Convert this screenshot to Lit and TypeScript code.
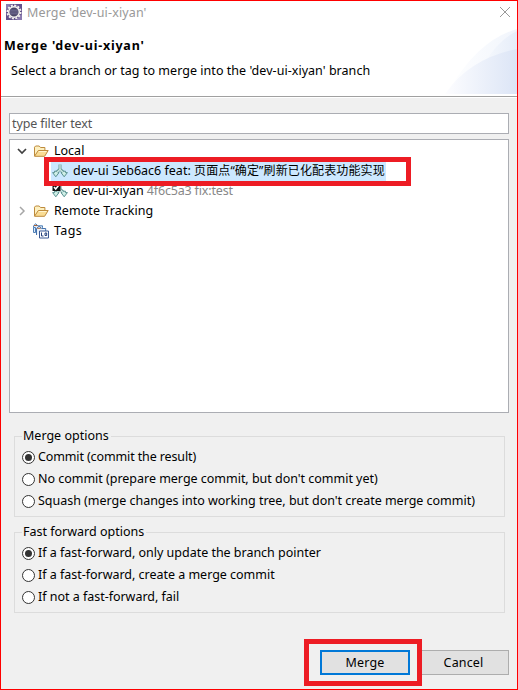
import { LitElement, html, css, svg, nothing } from "lit";
import { customElement, property, state } from "lit/decorators.js";
import { classMap } from "lit/directives/class-map.js";

const eclipseIcon = svg`<svg width="16" height="16" viewBox="0 0 16 16">
  <rect width="16" height="16" fill="#63528c"/>
  <path d="M0 0h5L0 6zM16 16h-6l6-6z" fill="#8a7bb0"/>
  <circle cx="8" cy="8" r="6.6" fill="none" stroke="#f3f1ee" stroke-width="1.8" stroke-dasharray="2.1 1.35"/>
  <circle cx="8" cy="8" r="5.3" fill="#4b4668" stroke="#f3f1ee" stroke-width="1.5"/>
  <path d="M4.2 6.2h7.6M3.8 8h8.4M4.2 9.8h7.6" stroke="#77739a" stroke-width=".9"/>
</svg>`;

const folderIcon = svg`<svg width="16" height="16" viewBox="0 0 16 16">
  <path d="M1.5 13V4.2L2.6 3h3.6l1.3 1.500h4.400v3" fill="#fdf0c0" stroke="#bd8a3c"/>
  <path d="M1.500 13.300L5.300 7.500h9.900l-3.600 5.800z" fill="#f9dc94" stroke="#bd8a3c" stroke-linejoin="round"/>
  <path d="M5.800 8.500h7.600" stroke="#fff4cf"/>
</svg>`;

const branchGlyph = svg`
  <path d="M8 1.500V6M8 6L3.700 10.300M8 6l4.300 4.300" fill="none" stroke="#6a9c9c" stroke-width="3"/>
  <path d="M.6 9.600h1.900V8.200h2.600v1.400h1.900L3.800 13.800zM9 9.600h1.900V8.200h2.600v1.400h1.900L12.200 13.800z" fill="#cdeee5" stroke="#5b9292"/>
  <path d="M8 1.500V6.300M8 6.300L3.800 10.600M8 6.300l4.200 4.300" fill="none" stroke="#d5f1ea" stroke-width="1.200"/>`;

const branchIcon = svg`<svg width="16" height="16" viewBox="0 0 16 16">${branchGlyph}</svg>`;

const checkedOutIcon = svg`<svg width="16" height="16" viewBox="0 0 16 16">${branchGlyph}
  <rect x=".500" y="0" width="8" height="8" fill="#111"/>
  <path d="M2 4l1.700 2L7.300 1.500" fill="none" stroke="#fff" stroke-width="1.500"/>
</svg>`;

const tagsIcon = svg`<svg width="16" height="16" viewBox="0 0 16 16">
  <path d="M.5 4.500V2.800L2.700.8l2.200 2h4.600v2M.5 4.500h2v5h-2z" fill="#dce9fa" stroke="#4f7fb5"/>
  <path d="M3.500 12V5.500l2.600-2.300 2.600 2.300h4V9" fill="#eaf2fc" stroke="#4573ad"/>
  <path d="M1 2.500h3.500M4.200 5.300h3.600" stroke="#a86438"/>
  <path d="M6.500 8h9v7h-9z" fill="#fff" stroke="#3c5a94"/>
  <path d="M8.500 9.500V13h2M12 10h1.700v2.500H12z" fill="none" stroke="#24407c"/>
</svg>`;

const icons = { folder: folderIcon, branch: branchIcon, head: checkedOutIcon, tags: tagsIcon };

interface TreeNode {
  depth: number;
  icon: keyof typeof icons;
  label: string;
  detail?: string;
  expanded?: boolean;
  selected?: boolean;
  spacing?: string;
}

const nodes: TreeNode[] = [
  { depth: 0, icon: "folder", label: "Local", expanded: true },
  { depth: 1, icon: "branch", label: "dev-ui 5eb6ac6 feat: ", detail: "页面点“确定”刷新已化配表功能实现", selected: true },
  { depth: 1, icon: "head", label: "dev-ui-xiyan", detail: "4f6c5a3 fix:test" },
  { depth: 0, icon: "folder", label: "Remote Tracking", expanded: false, spacing: "wide" },
  { depth: 0, icon: "tags", label: "Tags", spacing: "wider" },
];

@customElement("option-group")
class OptionGroup extends LitElement {
  @property() caption = "";
  @property({ type: Array }) options: string[] = [];
  @state() private chosen = 0;

  static styles = css`
    :host { display: block; }
    fieldset {
      box-sizing: border-box; height: 90px; margin: 0; padding: 0 0 0 7px;
      border: 1px solid #dcdcdc; min-width: 0;
    }
    legend { padding: 0 2px 0 1px; height: 18px; line-height: 18px; }
    .list { display: flex; flex-direction: column; gap: 4px; margin-top: 3px; }
    .row { display: flex; align-items: center; gap: 3px; height: 18px; white-space: nowrap; letter-spacing: -.02px; }
    .tight { letter-spacing: -.12px; }
    .dot {
      box-sizing: border-box; width: 13px; height: 13px; border: 1px solid #333;
      border-radius: 50%; background: #fff; display: grid; place-items: center;
    }
    .on::after { content: ""; width: 7px; height: 7px; border-radius: 50%; background: #333; }
  `;

  render() {
    return html`<fieldset>
      <legend>${this.caption}</legend>
      <div class="list">
        ${this.options.map((text, i) => html`
          <div class="row" @click=${() => (this.chosen = i)}>
            <span class=${classMap({ dot: true, on: i === this.chosen })}></span><span
              class=${classMap({ tight: text.startsWith("Commit") })}>${text}</span>
          </div>`)}
      </div>
    </fieldset>`;
  }
}

@customElement("app-root")
class AppRoot extends LitElement {
  static styles = css`
    :host {
      display: block; box-sizing: border-box; width: 518px; height: 690px;
      border: 1px solid #f00; background: #f0f0f0; color: #000; overflow: hidden;
      font: 12.5px/18px "Noto Sans", "Noto Sans CJK SC", sans-serif;
    }
    svg { display: block; flex: none; }
    header { position: relative; height: 95px; background: #fff; border-bottom: 1px solid #a0a0a0; box-shadow: 0 1px #fff; }
    .swoosh { position: absolute; right: 0; bottom: 2px; }
    .titlebar { display: flex; align-items: center; height: 22px; padding: 0 6px 0 5px; color: #999; }
    .titlebar .name { flex: 1; padding: 2px 0 0 5px; letter-spacing: .13px; }
    h1 { margin: 13px 0 0 3px; font-size: 12.5px; line-height: 20px; letter-spacing: .78px; }
    .hint { margin: 6px 0 0 10px; letter-spacing: .04px; }
    main { padding: 16px 8px 0; }
    .filter {
      box-sizing: border-box; height: 21px; padding: 0 2px; line-height: 19px; letter-spacing: -.12px;
      border: 1px solid #abadb3; background: #fff; color: #555;
    }
    .tree {
      box-sizing: border-box; position: relative; height: 274px; margin-top: 5px; padding-top: 1px;
      border: 1px solid #abadb3; background: #fff;
    }
    .node { display: flex; align-items: center; height: 20px; padding-left: 6px; white-space: pre; }
    .child { padding-left: 24px; }
    .twisty { width: 12px; height: 12px; margin-right: 5px; }
    .content { display: flex; align-items: center; gap: 5px; height: 20px; padding: 0 1px 0 0; }
    .child .content { padding-left: 1px; }
    .selected .content { background: #cce8ff; }
    .detail { color: #888; letter-spacing: -.17px; }
    .selected .detail { font-size: 12px; color: #000; letter-spacing: .13px; }
    .wide { letter-spacing: .06px; }
    .wider { letter-spacing: .4px; }
    .gap { margin-left: 3px; }
    .mark { position: absolute; box-sizing: border-box; border: 5px solid #ed1c24; }
    .mark.branch { left: 34px; top: 17px; width: 367px; height: 29px; }
    .groups { display: grid; gap: 6px; padding: 14px 4px 0 5px; }
    footer { display: flex; justify-content: flex-end; padding: 37px 8px 0 0; }
    .btn {
      box-sizing: border-box; position: relative; width: 91px; height: 25px; line-height: 23px;
      border: 1px solid #adadad; background: #e1e1e1; text-align: center; letter-spacing: .15px;
    }
    .primary { width: 90px; margin-right: 8px; border: 2px solid #0078d7; line-height: 21px; }
    .mark.button { left: -18px; top: -13px; width: 118px; height: 47px; z-index: 1; }
  `;

  private twisty(node: TreeNode) {
    if (node.expanded === undefined) return nothing;
    return node.expanded
      ? svg`<svg width="12" height="12" viewBox="0 0 12 12"><path d="M2 4l4 4 4-4" fill="none" stroke="#404040" stroke-width="1.700"/></svg>`
      : svg`<svg width="12" height="12" viewBox="0 0 12 12"><path d="M4 2l4 4-4 4" fill="none" stroke="#a6a6a6" stroke-width="1.500"/></svg>`;
  }

  private node(n: TreeNode) {
    return html`<div class=${classMap({ node: true, child: n.depth > 0, selected: !!n.selected })}>
      <span class="twisty">${this.twisty(n)}</span><div class="content">${icons[n.icon]}<div><span class=${n.spacing ?? ""}>${n.label}</span>${
        n.detail ? html`<span class=${classMap({ detail: true, gap: !n.selected })}>${n.detail}</span>` : nothing
      }</div></div></div>`;
  }

  render() {
    return html`
      <header>
        <svg class="swoosh" width="74" height="67" viewBox="0 0 74 67">
          <defs>
            <linearGradient id="a"><stop offset="0" stop-color="#fff"/><stop offset="1" stop-color="#f1f5fc"/></linearGradient>
            <linearGradient id="b"><stop offset="0" stop-color="#fdfdff"/><stop offset="1" stop-color="#dce5f6"/></linearGradient>
            <linearGradient id="c"><stop offset="0" stop-color="#f5f8fd"/><stop offset="1" stop-color="#e6edf9"/></linearGradient>
          </defs>
          <path d="M8 60Q36 13 74 2V67H2z" fill="url(#a)"/>
          <path d="M42 36Q54 14 74 4V67H42z" fill="url(#c)"/>
          <path d="M2 67Q27 31 74 22V67z" fill="url(#b)"/>
        </svg>
        <div class="titlebar">
          ${eclipseIcon}<span class="name">Merge 'dev-ui-xiyan'</span>
          <svg width="12" height="12" viewBox="0 0 12 12"><path d="M1 1l10 10M11 1L1 11" stroke="#999"/></svg>
        </div>
        <h1>Merge 'dev-ui-xiyan'</h1>
        <div class="hint">Select a branch or tag to merge into the 'dev-ui-xiyan' branch</div>
      </header>
      <main>
        <div class="filter">type filter text</div>
        <div class="tree">
          ${nodes.map((n) => this.node(n))}
          <div class="mark branch"></div>
        </div>
        <div class="groups">
          <option-group caption="Merge options" .options=${[
            "Commit (commit the result)",
            "No commit (prepare merge commit, but don't commit yet)",
            "Squash (merge changes into working tree, but don't create merge commit)",
          ]}></option-group>
          <option-group caption="Fast forward options" .options=${[
            "If a fast-forward, only update the branch pointer",
            "If a fast-forward, create a merge commit",
            "If not a fast-forward, fail",
          ]}></option-group>
        </div>
      </main>
      <footer>
        <div class="btn primary">Merge<div class="mark button"></div></div>
        <div class="btn">Cancel</div>
      </footer>`;
  }
}
